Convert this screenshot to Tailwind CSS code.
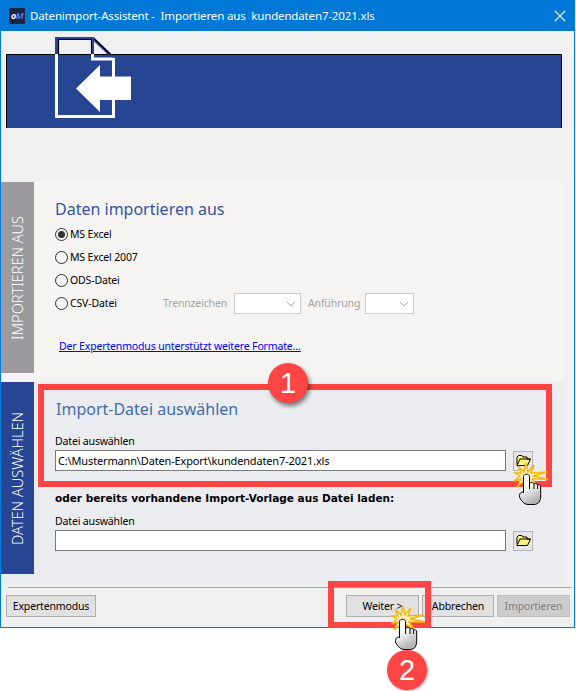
<!DOCTYPE html>
<html lang="de">
<head>
  <meta charset="UTF-8" />
  <title>Datenimport-Assistent</title>
  <script src="https://cdn.jsdelivr.net/npm/@tailwindcss/browser@4"></script>
</head>
<body class="bg-white font-['Noto_Sans',sans-serif] text-[10.5px] tracking-[-0.15px] leading-none text-black">
<div class="relative w-[576px] h-[691px] overflow-hidden">

  <!-- window -->
  <div class="w-[575px] h-[628px] flex flex-col bg-[#f0f0f0] border-x border-b border-[#0078d7]">
    <div class="h-[31px] shrink-0 -mx-px bg-[#0078d7] flex items-center pl-[9px] pr-[9px] text-white text-[11.5px]">
      <div class="w-[16px] h-[16px] mr-[5px] bg-[#1a2340] rounded-[1px] flex items-center justify-center text-[9px] font-bold italic tracking-[-0.5px]"><span class="text-white">o</span><span class="text-[#4a7df0]">M</span></div>
      <span class="whitespace-pre">Datenimport-Assistent -  Importieren aus  kundendaten7-2021.xls</span>
      <svg class="ml-auto" width="12" height="12" viewBox="0 0 12 12"><path d="M1 1 L11 11 M11 1 L1 11" stroke="#fff" stroke-width="1.1" fill="none"/></svg>
    </div>

    <div class="ml-[5px] mt-[23px] w-[556px] h-[74px] shrink-0 bg-[#264592] border-x border-t border-black"></div>

    <!-- section 1 -->
    <section class="mt-[54px] w-[563px] h-[200px] shrink-0 flex bg-[#f6f4f3]">
      <div class="w-[33px] h-[191px] bg-[#9c9a9e] flex items-center justify-center">
        <span class="[writing-mode:vertical-rl] rotate-180 text-white text-[14.5px] font-light tracking-normal whitespace-nowrap pb-[1px]">IMPORTIEREN AUS</span>
      </div>
      <div class="pl-[21px] flex flex-col">
        <h2 class="mt-[18px] h-[19px] text-[16px] tracking-normal leading-[19px] text-[#2f55a4]">Daten importieren aus</h2>
        <div class="mt-[4px] flex flex-col">
          <label class="h-[23px] flex items-center gap-[2px]"><span class="w-[13px] h-[13px] rounded-full border border-[#333] flex items-center justify-center"><span class="w-[7px] h-[7px] rounded-full bg-[#333]"></span></span>MS Excel</label>
          <label class="h-[23px] flex items-center gap-[2px]"><span class="w-[13px] h-[13px] rounded-full border border-[#333]"></span>MS Excel 2007</label>
          <label class="h-[23px] flex items-center gap-[2px]"><span class="w-[13px] h-[13px] rounded-full border border-[#333]"></span>ODS-Datei</label>
          <div class="h-[23px] flex items-center">
            <label class="w-[108px] flex items-center gap-[2px]"><span class="w-[13px] h-[13px] rounded-full border border-[#333]"></span>CSV-Datei</label>
            <span class="w-[71px] text-[#a3a3a3]">Trennzeichen</span>
            <span class="w-[67px] h-[21px] bg-white border border-[#ccc] flex items-center justify-end pr-[4px]"><svg width="10" height="6" viewBox="0 0 10 6"><path d="M1 1 L5 5 L9 1" fill="none" stroke="#aaa"/></svg></span>
            <span class="ml-[7px] w-[57px] text-[#a3a3a3]">Anführung</span>
            <span class="w-[49px] h-[21px] bg-white border border-[#ccc] flex items-center justify-end pr-[4px]"><svg width="10" height="6" viewBox="0 0 10 6"><path d="M1 1 L5 5 L9 1" fill="none" stroke="#aaa"/></svg></span>
          </div>
        </div>
        <a class="mt-[26px] ml-[4px] text-[#0000ff] underline">Der Expertenmodus unterstützt weitere Formate…</a>
      </div>
    </section>

    <!-- section 2 -->
    <section class="w-[563px] h-[201px] shrink-0 flex bg-[#ebecf0]">
      <div class="w-[33px] h-[192px] bg-[#264592] flex items-center justify-center">
        <span class="[writing-mode:vertical-rl] rotate-180 text-white text-[14.5px] font-light tracking-normal whitespace-nowrap">DATEN AUSWÄHLEN</span>
      </div>
      <div class="pl-[21px] flex flex-col">
        <h2 class="mt-[18px] ml-[1px] h-[19px] text-[16px] tracking-normal leading-[19px] text-[#3f6cb0]">Import-Datei auswählen</h2>
        <div class="mt-[17px] h-[12px]">Datei auswählen</div>
        <div class="mt-[2px] flex items-center gap-[7px]">
          <div class="w-[451px] h-[21px] bg-white border border-[#7a7a7a] flex items-center pl-[2px] text-[11px]">C:\Mustermann\Daten-Export\kundendaten7-2021.xls</div>
          <button class="w-[20px] h-[20px] border border-[#b5b5b5] bg-[#e6e6e6] flex items-center justify-center">
            <svg width="15" height="11" viewBox="0 0 15 11"><path d="M1 9.5 V2 L2.5 .5 H6 L7 2 H11 V4 H14.5 L11.5 10.5 H1 Z" fill="#fff27a" stroke="#000"/><path d="M1.5 9.5 L4 4 H14" fill="none" stroke="#000"/></svg>
          </button>
        </div>
        <div class="mt-[21px] h-[12px] font-['DejaVu_Sans',sans-serif] font-bold text-[10.5px] tracking-normal leading-[12px] whitespace-nowrap">oder bereits vorhandene Import-Vorlage aus Datei laden:</div>
        <div class="mt-[12px] h-[12px]">Datei auswählen</div>
        <div class="mt-[2px] flex items-center gap-[7px]">
          <div class="w-[451px] h-[21px] bg-white border border-[#7a7a7a]"></div>
          <button class="w-[20px] h-[20px] border border-[#b5b5b5] bg-[#e6e6e6] flex items-center justify-center">
            <svg width="15" height="11" viewBox="0 0 15 11"><path d="M1 9.5 V2 L2.5 .5 H6 L7 2 H11 V4 H14.5 L11.5 10.5 H1 Z" fill="#fff27a" stroke="#000"/><path d="M1.5 9.5 L4 4 H14" fill="none" stroke="#000"/></svg>
          </button>
        </div>
      </div>
    </section>

    <div class="mt-[4px] ml-[7px] w-[563px] h-px shrink-0 bg-[#a0a0a0]"></div>

    <div class="mt-[7px] pl-[5px] flex">
      <button class="w-[90px] h-[22px] bg-[#e1e1e1] border border-[#adadad]">Expertenmodus</button>
      <button class="ml-[250px] w-[73px] h-[22px] bg-[#e1e1e1] border border-[#adadad]">Weiter &gt;</button>
      <button class="ml-[3px] w-[72px] h-[22px] bg-[#e1e1e1] border border-[#adadad]">Abbrechen</button>
      <button class="ml-[3px] w-[73px] h-[22px] bg-[#cccccc] border border-[#bfbfbf] text-[#808080]">Importieren</button>
    </div>
  </div>

  <!-- overlay: document icon, annotation frames, cursors -->
  <svg class="absolute left-0 top-0 pointer-events-none" width="576" height="691" viewBox="0 0 576 691">
    <defs>
      <linearGradient id="glove" x1="0" y1="0" x2="0.4" y2="1"><stop offset="0.45" stop-color="#fff"/><stop offset="1" stop-color="#b4b4b4"/></linearGradient>
      <g id="burst"><polygon points="0,-13 2,-4 8,-11 5,-3 21,-4 7,0 22,3 6,3 11,10 2,5 0,13 -2,5 -9,11 -5,3 -12,5 -6,0 -11,-3 -5,-3 -8,-10 -2,-4" fill="#fdf0b0" stroke="#f3b90f" stroke-width="1.4" stroke-linejoin="miter"/></g>
      <g id="hand"><path d="M4.5 3.5 C4.5 .5 10.5 .5 10.5 3.5 V11 C11 8.8 15 8.8 15 11.5 C15.5 9.8 18.5 10 18.5 12.5 C19 11 21.7 11.5 21.7 14 V23 C21.7 28 19.5 31.5 15 31.5 H9 C5 31.5 3 28 1.5 26 C0 24 0 21 2 19.5 C3 18.8 4 19 4.5 20 Z" fill="url(#glove)" stroke="#000" stroke-width="1"/><path d="M10.5 11 V16 M15 11.5 V16 M18.5 12.5 V16" stroke="#000" fill="none"/></g>
    </defs>

    <!-- import document -->
    <path d="M56.5 54 V38.5 H93 L113.5 58" fill="none" stroke="#264592" stroke-width="3"/>
    <path d="M58.5 54 V39.5 H91.5 V54 M93.5 38 L111 55" fill="none" stroke="#000" stroke-width="1.2"/>
    <path d="M93 38 V54" stroke="#264592" stroke-width="2"/>
    <path d="M56.5 54 V116.5 H113.5 V58 M92.5 54 V59 H113" fill="none" stroke="#fff" stroke-width="3"/>
    <polygon points="76,88.5 100,65 100,76.5 131,76.5 131,100 100,100 100,112" fill="#fff"/>

    <rect x="41" y="387" width="508" height="97" fill="none" stroke="#ff4444" stroke-width="6"/>
    <rect x="331" y="584" width="97" height="41" fill="none" stroke="#ff4444" stroke-width="6"/>

    <use href="#burst" x="526" y="476"/>
    <use href="#hand" x="519" y="473"/>
    <use href="#burst" x="403" y="619"/>
    <use href="#hand" x="395" y="618"/>
  </svg>

  <!-- numbered badges -->
  <div class="absolute left-[268px] top-[363px] w-[40px] h-[40px] rounded-full bg-[#ff4444] shadow-[2px_3px_4px_rgba(0,0,0,0.5)] flex items-center justify-center text-white text-[29px] tracking-normal font-['Liberation_Sans',sans-serif]">1</div>
  <div class="absolute left-[387px] top-[650px] w-[40px] h-[40px] rounded-full bg-[#ff4444] shadow-[1px_1px_3px_rgba(0,0,0,0.35)] flex items-center justify-center text-white text-[29px] tracking-normal font-['Liberation_Sans',sans-serif]">2</div>
</div>
</body>
</html>
